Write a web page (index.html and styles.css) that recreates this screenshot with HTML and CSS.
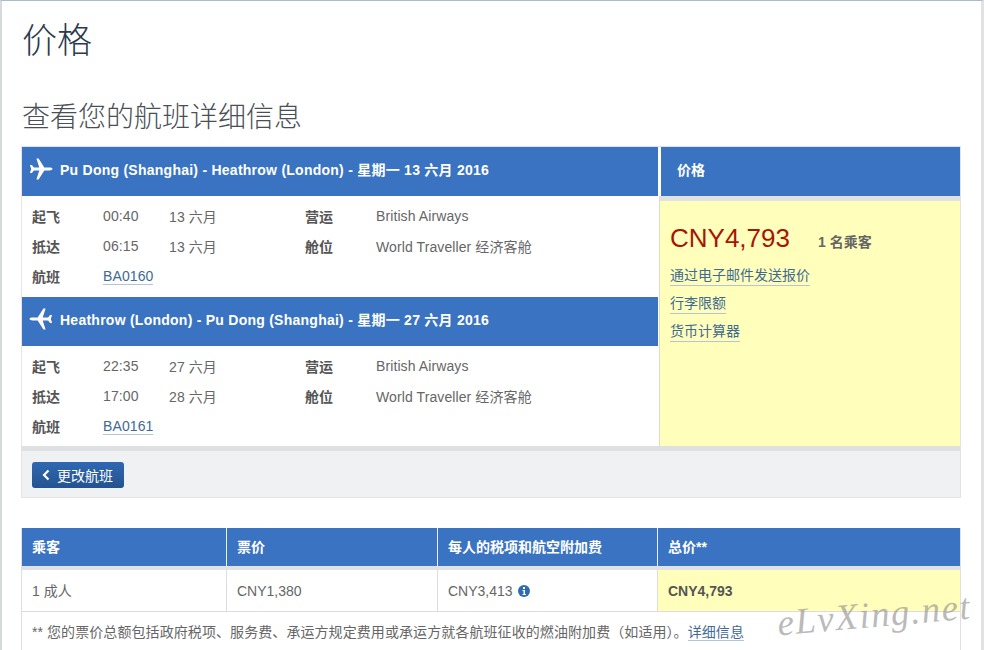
FILE: index.html
```html
<!DOCTYPE html>
<html lang="zh">
<head>
<meta charset="utf-8">
<title>价格</title>
<link rel="stylesheet" href="styles.css">
</head>
<body>
<div class="page">
  <h1 class="title">价格</h1>
  <h2 class="subtitle">查看您的航班详细信息</h2>

  <section class="summary">
    <div class="flights">
      <div class="flight-head">
        <svg class="plane" viewBox="0 0 24 24"><path d="M23.500 12c0-.9-1.600-1.400-3.200-1.400h-5L9.600 1.500H7.400l2.900 9.100H4.900L2.900 8H.9l1.300 4-1.300 4h2l2-2.600h5.400l-2.900 9.100h2.200l5.700-9.100h5c1.600 0 3.200-.5 3.200-1.400z"/></svg>
        <span>Pu Dong (Shanghai) - Heathrow (London) - 星期一 13 六月 2016</span>
      </div>
      <div class="flight-body">
        <b>起飞</b><span>00:40</span><span>13 六月</span><b>营运</b><span>British Airways</span>
        <b>抵达</b><span>06:15</span><span>13 六月</span><b>舱位</b><span>World Traveller 经济客舱</span>
        <b>航班</b><span><a href="#">BA0160</a></span>
      </div>
      <div class="flight-head">
        <svg class="plane flip" viewBox="0 0 24 24"><path d="M23.500 12c0-.9-1.600-1.400-3.200-1.400h-5L9.600 1.500H7.400l2.900 9.100H4.900L2.900 8H.9l1.300 4-1.300 4h2l2-2.600h5.400l-2.900 9.100h2.200l5.700-9.100h5c1.600 0 3.200-.5 3.200-1.400z"/></svg>
        <span>Heathrow (London) - Pu Dong (Shanghai) - 星期一 27 六月 2016</span>
      </div>
      <div class="flight-body">
        <b>起飞</b><span>22:35</span><span>27 六月</span><b>营运</b><span>British Airways</span>
        <b>抵达</b><span>17:00</span><span>28 六月</span><b>舱位</b><span>World Traveller 经济客舱</span>
        <b>航班</b><span><a href="#">BA0161</a></span>
      </div>
    </div>
    <aside class="price">
      <div class="price-head">价格</div>
      <div class="price-body">
        <div class="price-line"><span class="amount">CNY4,793</span><b class="pax">1 名乘客</b></div>
        <a href="#">通过电子邮件发送报价</a>
        <a href="#">行李限额</a>
        <a href="#">货币计算器</a>
      </div>
    </aside>
  </section>

  <div class="actions">
    <button class="change" type="button">
      <svg class="chev" viewBox="0 0 10 12"><path d="M7.500 1.500 3 6l4.500 4.500"/></svg>更改航班
    </button>
  </div>

  <section class="fares">
    <div class="fare-row fare-head">
      <div>乘客</div><div>票价</div><div>每人的税项和航空附加费</div><div>总价**</div>
    </div>
    <div class="fare-row fare-data">
      <div>1 成人</div>
      <div>CNY1,380</div>
      <div>CNY3,413 <svg class="info" viewBox="0 0 12 12"><circle cx="6" cy="6" r="6"/><rect x="5" y="2" width="2" height="2" fill="#fff"/><path d="M4.500 5h2.500v4h1v1H4.500V9h1V6h-1z" fill="#fff"/></svg></div>
      <div class="total">CNY4,793</div>
    </div>
    <div class="note">** 您的票价总额包括政府税项、服务费、承运方规定费用或承运方就各航班征收的燃油附加费（如适用）。<a href="#">详细信息</a></div>
  </section>

  <div class="mark">eLvXing.net</div>
</div>
</body>
</html>
```
FILE: styles.css
```css
* { box-sizing: border-box; }
html, body { margin: 0; height: 650px; overflow: hidden; background: #fff; }
body {
  font-family: "Liberation Sans", "Noto Sans CJK SC", sans-serif;
  font-size: 14px;
  color: #666;
}
.page {
  position: relative;
  width: 984px;
  height: 650px;
  overflow: hidden;
  padding: 0 0 0 19px;
  border-top: 1px solid #a9bcc8;
  border-left: 2px solid #d5dadd;
  border-right: 3px solid #e2e2e2;
}
.title {
  margin: 0;
  height: 100px;
  padding-top: 17px;
  padding-left: 1px;
  font-size: 35px;
  line-height: 46px;
  font-weight: 300;
  color: #2b3a4d;
}
.subtitle {
  margin: 0;
  height: 45px;
  padding-top: 2px;
  padding-left: 1px;
  font-size: 28px;
  line-height: 30px;
  font-weight: 300;
  color: #4a4f55;
}
.summary {
  display: flex;
  width: 940px;
  height: 300px;
  border-top: 1px solid #dde3ea;
  border-left: 1px solid #e4e4e4;
  border-right: 1px solid #e4e4e4;
}
.flights { width: 636px; flex: none; }
.flight-head {
  display: flex;
  align-items: center;
  height: 49px;
  padding: 0 0 5px 7px;
  gap: 7px;
  background: #3a73c1;
  color: #fff;
  font-weight: 700;
  letter-spacing: .25px;
}
.flight-body {
  display: grid;
  grid-template-columns: 71px 66px 136px 71px 1fr;
  grid-auto-rows: 30px;
  align-items: center;
  height: 101px;
  padding: 5px 0 0 10px;
  letter-spacing: .1px;
}
.flight-body:last-child { height: 100px; }
.flight-body b { color: #555; font-weight: 700; }
.plane { width: 24px; height: 24px; fill: #fff; flex: none; }
.flip { transform: scaleX(-1); }
a { color: #3f6a93; text-decoration: none; border-bottom: 1px solid #b4c4d4; }
.price {
  flex: 1;
  margin-left: 1px;
  display: flex;
  flex-direction: column;
}
.price-head {
  height: 49px;
  line-height: 47px;
  padding-left: 16px;
  background: #3a73c1;
  color: #fff;
  font-weight: 700;
  margin-left: 2px;
}
.price-body {
  flex: 1;
  display: flex;
  flex-direction: column;
  align-items: flex-start;
  gap: 7px;
  padding-left: 10px;
  background: #ffffbb;
  border-top: 5px solid #dfe1e3;
  border-left: 1px solid #dcdcc8;
}
.price-line {
  display: flex;
  align-items: baseline;
  height: 58px;
  padding-top: 19px;
  gap: 28px;
  margin-bottom: -1px;
}
.amount { font-size: 26px; line-height: 36px; color: #a81505; }
.pax { color: #666; font-weight: 700; }
.price-body a { line-height: 20px; height: 21px; }
.actions {
  width: 940px;
  height: 52px;
  padding: 11px 0 0 10px;
  background: #f0f1f2;
  border-top: 5px solid #dfe0e2;
  border-left: 1px solid #e4e4e4;
  border-right: 1px solid #e4e4e4;
  border-bottom: 1px solid #e4e4e4;
}
.change {
  display: flex;
  align-items: center;
  gap: 6px;
  width: 92px;
  height: 26px;
  padding: 0 0 0 9px;
  border: 0;
  border-radius: 3px;
  background: linear-gradient(#2f68b2, #24528f);
  color: #fff;
  font: inherit;
}
.chev { width: 10px; height: 12px; fill: none; stroke: #fff; stroke-width: 2.200; }
.fares { width: 940px; margin-top: 30px; border-right: 1px solid #e0e0e0; border-left: 1px solid #e0e0e0; }
.fare-row {
  display: grid;
  grid-template-columns: 204px 211px 220px 1fr;
}
.fare-head > div {
  height: 38px;
  line-height: 38px;
  padding-left: 10px;
  background: #3a73c1;
  color: #fff;
  font-weight: 700;
  border-left: 1px solid #e8f0f8;
}
.fare-head > div:first-child { border-left: 0; }
.fare-data {
  border-top: 4px solid #dfe1e3;
  border-bottom: 1px solid #dcdcdc;
}
.fare-data > div {
  height: 41px;
  line-height: 42px;
  padding-left: 10px;
  border-left: 1px solid #dcdcdc;
}
.fare-data > div:first-child { border-left: 0; }
.total { background: #ffffbb; font-weight: 700; color: #555; }
.info { width: 12px; height: 12px; fill: #2f6bb0; margin-left: 2px; vertical-align: -1px; }
.note { height: 60px; padding: 10px 0 0 10px; line-height: 20px; letter-spacing: .08px; }
.mark {
  position: absolute;
  left: 775px;
  top: 592px;
  font-family: "Liberation Serif", serif;
  font-style: italic;
  font-size: 37px;
  letter-spacing: 1.500px;
  color: rgba(140, 140, 140, .6);
  transform: rotate(-5deg);
}
```
